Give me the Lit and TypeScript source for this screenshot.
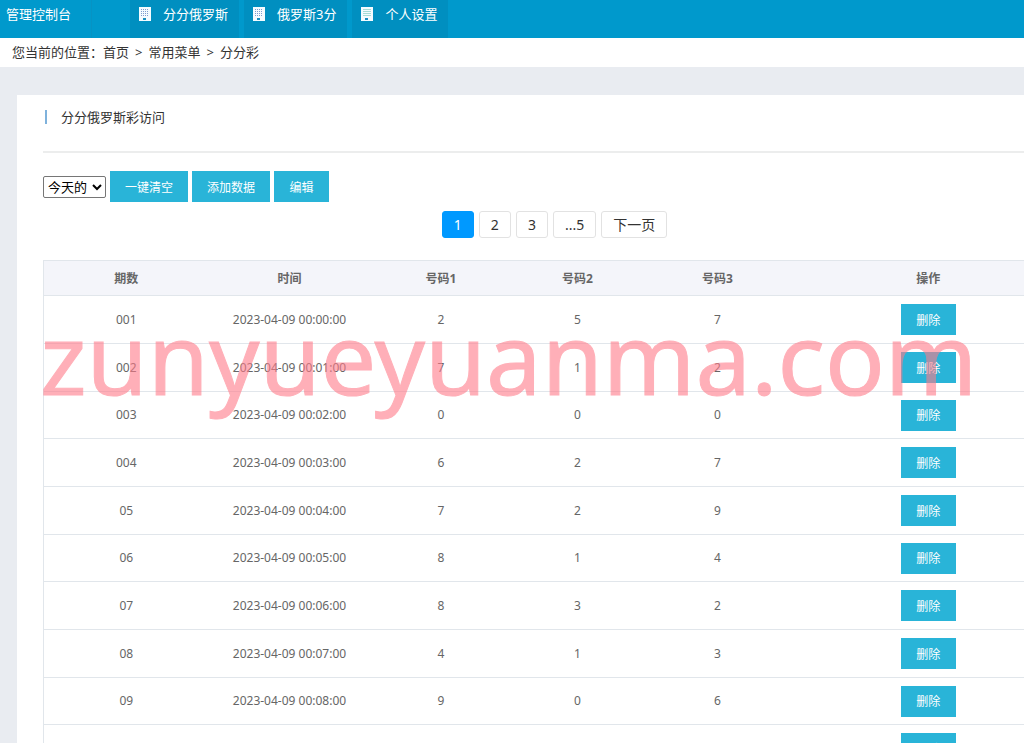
import { LitElement, html, css, svg } from "lit";
import { customElement } from "lit/decorators.js";

interface Draw {
  issue: string;
  time: string;
  codes: number[];
}

const DRAWS: Draw[] = [
  { issue: "001", time: "2023-04-09 00:00:00", codes: [2, 5, 7] },
  { issue: "002", time: "2023-04-09 00:01:00", codes: [7, 1, 2] },
  { issue: "003", time: "2023-04-09 00:02:00", codes: [0, 0, 0] },
  { issue: "004", time: "2023-04-09 00:03:00", codes: [6, 2, 7] },
  { issue: "05", time: "2023-04-09 00:04:00", codes: [7, 2, 9] },
  { issue: "06", time: "2023-04-09 00:05:00", codes: [8, 1, 4] },
  { issue: "07", time: "2023-04-09 00:06:00", codes: [8, 3, 2] },
  { issue: "08", time: "2023-04-09 00:07:00", codes: [4, 1, 3] },
  { issue: "09", time: "2023-04-09 00:08:00", codes: [9, 0, 6] },
  { issue: "10", time: "2023-04-09 00:09:00", codes: [3, 6, 1] },
];

const windows = (kind: "grid" | "lines") =>
  kind === "grid"
    ? svg`<path fill="#7f9bd0" d="M2 2h1v1H2zM4 2h1v1H4zM6 2h1v1H6zM8 2h1v1H8zM2 4h1v1H2zM4 4h1v1H4zM6 4h1v1H6zM8 4h1v1H8zM2 6h1v1H2zM4 6h1v1H4zM6 6h1v1H6zM8 6h1v1H8zM2 8h1v1H2zM4 8h1v1H4zM6 8h1v1H6zM8 8h1v1H8z" />`
    : svg`<path fill="#a5dcd6" d="M2 2h8v1H2zM2 4h8v1H2zM2 6h8v1H2zM2 8h8v1H2z" />`;

const building = (kind: "grid" | "lines") => html`
  <svg class="icon" viewBox="0 0 12 14" aria-hidden="true">
    <path fill="#f4fbff" d="M0 0h12v14H0z" />
    ${windows(kind)}
    <path fill="#1b8fc0" d="M4 11h3v2H4z" />
  </svg>
`;

@customElement("app-root")
export class AppRoot extends LitElement {
  static styles = css`
    :host {
      display: block;
      height: 100vh;
      overflow: hidden;
      background: #e9ecf1;
      color: #333;
      font: 13px/20px "Noto Sans", "Noto Sans CJK SC", sans-serif;
    }
    * {
      box-sizing: border-box;
    }
    a {
      color: inherit;
      text-decoration: none;
    }
    .top {
      display: flex;
      height: 38px;
      background: #0099cc;
      color: #fff;
    }
    .brand {
      width: 92px;
      padding: 4px 6px;
      border-right: 1px solid #0693c4;
    }
    .tabs {
      display: flex;
      gap: 5px;
      margin-left: 38px;
    }
    .tab {
      display: flex;
      gap: 12px;
      padding: 4px 11px 4px 9px;
      background: #008fc0;
    }
    .icon {
      width: 12px;
      height: 14px;
      margin-top: 3px;
    }
    .crumbs {
      display: flex;
      gap: 6px;
      height: 29px;
      padding: 4px 12px;
      background: #fff;
    }
    .panel {
      position: relative;
      min-width: 1075px;
      margin: 28px 16px 0 17px;
      padding: 12px 26px;
      background: #fff;
    }
    .title {
      margin: 0;
      padding-bottom: 24px;
      border-bottom: 2px solid #eceded;
      font-size: 13px;
      font-weight: 400;
      line-height: 20px;
    }
    .title::before {
      content: "";
      display: inline-block;
      width: 2px;
      height: 14px;
      margin: 0 14px 0 2px;
      background: #7fb2dc;
      vertical-align: -2px;
    }
    .tools {
      display: flex;
      align-items: center;
      gap: 4px;
      margin-top: 18px;
    }
    .range {
      width: 63px;
      height: 22px;
      padding: 0;
      border: 1px solid #767676;
      border-radius: 2px;
      background: #fff;
      color: #000;
      font: 13px "Noto Sans", "Noto Sans CJK SC", sans-serif;
    }
    .btn {
      min-width: 55px;
      height: 31px;
      padding: 2px 15px 0;
      border: 0;
      background: #29b4d8;
      color: #fff;
      font: 12px/20px "Noto Sans", "Noto Sans CJK SC", sans-serif;
      vertical-align: middle;
    }
    .pages {
      display: flex;
      justify-content: center;
      gap: 5px;
      margin-top: 9px;
    }
    .page {
      padding: 2px 11px;
      border: 1px solid #e2e2e2;
      border-radius: 3px;
      font-size: 14px;
      line-height: 21px;
    }
    .page.current {
      border-color: #0099ff;
      background: #0099ff;
      color: #fff;
    }
    .data {
      width: 100%;
      margin-top: 22px;
      border: 1px solid #e1e6eb;
      border-collapse: collapse;
      table-layout: fixed;
      color: #666;
      font-size: 12px;
      text-align: center;
    }
    .data th {
      height: 35px;
      padding: 2px 0 0;
      background: #f4f5fa;
    }
    .data td {
      height: 48px;
      padding: 0;
      border-top: 1px solid #e1e6eb;
    }
    .data tr:nth-child(3n) td {
      height: 47px;
    }
    .c1 { width: 165px; }
    .c2 { width: 162px; }
    .c3 { width: 141px; }
    .c4 { width: 132px; }
    .c5 { width: 148px; }
    .mark {
      position: absolute;
      top: 196px;
      left: 23px;
      color: #ff7b89;
      font-size: 99px;
      line-height: 132px;
      -webkit-text-stroke: 1px #ff7b89;
      opacity: 0.6;
      pointer-events: none;
    }
  `;

  render() {
    return html`
      <header class="top">
        <a class="brand" href="#">管理控制台</a>
        <nav class="tabs">
          <a class="tab" href="#">${building("grid")}分分俄罗斯</a>
          <a class="tab" href="#">${building("grid")}俄罗斯3分</a>
          <a class="tab" href="#">${building("lines")}个人设置</a>
        </nav>
      </header>
      <nav class="crumbs">
        <span>您当前的位置：<a href="#">首页</a></span>
        <span>&gt;</span>
        <a href="#">常用菜单</a>
        <span>&gt;</span>
        <span>分分彩</span>
      </nav>
      <main class="panel">
        <h1 class="title">分分俄罗斯彩访问</h1>
        <div class="tools">
          <select class="range" aria-label="日期">
            <option>今天的</option>
          </select>
          <button class="btn">一键清空</button>
          <button class="btn">添加数据</button>
          <button class="btn">编辑</button>
        </div>
        <nav class="pages">
          <a class="page current" href="#">1</a>
          <a class="page" href="#">2</a>
          <a class="page" href="#">3</a>
          <a class="page" href="#">...5</a>
          <a class="page" href="#">下一页</a>
        </nav>
        <table class="data">
          <thead>
            <tr>
              <th class="c1">期数</th>
              <th class="c2">时间</th>
              <th class="c3">号码1</th>
              <th class="c4">号码2</th>
              <th class="c5">号码3</th>
              <th>操作</th>
            </tr>
          </thead>
          <tbody>
            ${DRAWS.map(
              (d) => html`
                <tr>
                  <td>${d.issue}</td>
                  <td>${d.time}</td>
                  ${d.codes.map((c) => html`<td>${c}</td>`)}
                  <td><button class="btn">删除</button></td>
                </tr>
              `
            )}
          </tbody>
        </table>
        <div class="mark">zunyueyuanma.com</div>
      </main>
    `;
  }
}
